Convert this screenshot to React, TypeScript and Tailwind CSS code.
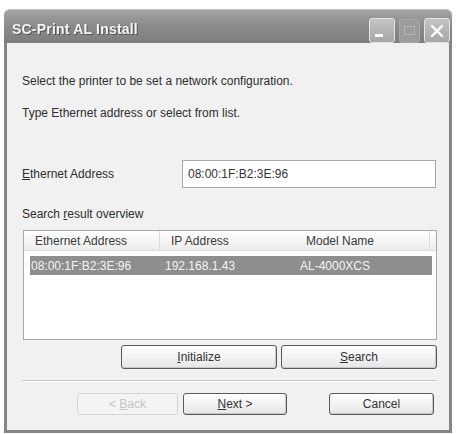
import React from "react";

// ─── Small pieces ────────────────────────────────────────────────────────────

function Btn({
  children,
  className = "",
  disabled = false,
}: {
  children: React.ReactNode;
  className?: string;
  disabled?: boolean;
}) {
  return (
    <button
      disabled={disabled}
      className={
        "flex items-center justify-center rounded-[3px] text-[12px] " +
        (disabled
          ? "border border-[#d4d4d4] bg-[#f4f4f4] text-[#c4c4c4] "
          : "border border-[#5a5a5a] bg-gradient-to-b from-[#ffffff] to-[#e6e6e6] text-[#333] shadow-[inset_-1px_-1px_0_#c8c8c8] ") +
        className
      }
    >
      {children}
    </button>
  );
}

function TitleButton({ children, faded = false }: { children: React.ReactNode; faded?: boolean }) {
  return (
    <div
      className={
        "flex items-center justify-center rounded-[3px] " +
        (faded
          ? "w-[21px] h-[24px] border border-[#a8a8a8] bg-[#9c9c9c]"
          : "w-[26px] h-[25px] border border-[#e4e4e4] bg-gradient-to-b from-[#c4c4c4] to-[#a6a6a6]")
      }
    >
      {children}
    </div>
  );
}

// ─── App ─────────────────────────────────────────────────────────────────────

export default function App() {
  return (
    <div
      className="w-[456px] h-[434px] bg-white pt-[9px] pl-[4px]"
      style={{ fontFamily: '"Liberation Sans", Arial, sans-serif' }}
    >
      <div className="w-[448px] h-[424px] flex flex-col">
        {/* ── Title bar ─────────────────────────────────────────────── */}
        <div className="h-[34px] rounded-t-[6px] bg-gradient-to-b from-[#a4a4a4] via-[#8a8a8a] to-[#7e7e7e] border-t border-[#c0c0c0] flex items-center pl-[8px] pr-[2px] pt-[6px]">
          <span className="text-[#f4f4f4] font-bold text-[14px] tracking-[0.2px] drop-shadow-[1px_1px_0_#555]">
            SC-Print AL Install
          </span>
          <div className="flex-1" />
          <div className="flex items-center gap-[4px] mt-[2px]">
            <TitleButton>
              <div className="w-[8px] h-[3px] bg-white mt-[10px] -ml-[6px]" />
            </TitleButton>
            <TitleButton faded>
              <div className="w-[11px] h-[9px] border border-[#b4b4b4]" />
            </TitleButton>
            <TitleButton>
              <svg viewBox="0 0 16 16" className="w-[16px] h-[16px]">
                <path d="M3 3 L13 13 M13 3 L3 13" stroke="white" strokeWidth="2.4" strokeLinecap="round" />
              </svg>
            </TitleButton>
          </div>
        </div>

        {/* ── Body ──────────────────────────────────────────────────── */}
        <div className="flex-1 bg-[#f1f1f1] border-x-[3px] border-b-[3px] border-[#858585] pl-[15px] pr-[12px] text-[12px] text-[#2e2e2e] flex flex-col">
          <p className="mt-[30px] leading-[16px]">Select the printer to be set a network configuration.</p>
          <p className="mt-[16px] leading-[16px]">Type Ethernet address or select from list.</p>

          {/* Ethernet address row */}
          <div className="mt-[39px] flex items-center">
            <span className="w-[160px]">
              <span className="underline">E</span>thernet Address
            </span>
            <div className="ml-auto mr-[1px] w-[254px] h-[28px] bg-white border border-[#a8a8a8] flex items-center px-[5px] text-[#333]">
              08:00:1F:B2:3E:96
            </div>
          </div>

          <p className="mt-[18px] leading-[16px]">
            Search <span className="underline">r</span>esult overview
          </p>

          {/* Result list */}
          <div className="mt-[8px] h-[110px] w-[414px] ml-[1px] bg-white border border-[#a8a8a8] flex flex-col">
            <div className="h-[20px] flex items-center bg-gradient-to-b from-[#ffffff] to-[#ececec] border-b border-[#dcdcdc] text-[#3a3a3a]">
              <div className="w-[136px] pl-[11px] border-r border-[#dcdcdc] h-full flex items-center">Ethernet Address</div>
              <div className="w-[134px] pl-[11px] h-full flex items-center">IP Address</div>
              <div className="w-[136px] pl-[12px] border-r border-[#dcdcdc] h-full flex items-center">Model Name</div>
            </div>
            <div className="mt-[5px] ml-[6px] w-[402px] h-[19px] bg-[#8e8e8e] text-[#f4f4f4] flex items-center">
              <div className="w-[130px] pl-[1px]">08:00:1F:B2:3E:96</div>
              <div className="w-[134px] pl-[5px]">192.168.1.43</div>
              <div className="pl-[6px]">AL-4000XCS</div>
            </div>
          </div>

          {/* Initialize / Search */}
          <div className="mt-[5px] flex justify-end gap-[4px]">
            <Btn className="w-[156px] h-[24px]">
              <span><span className="underline">I</span>nitialize</span>
            </Btn>
            <Btn className="w-[156px] h-[24px]">
              <span><span className="underline">S</span>earch</span>
            </Btn>
          </div>

          <div className="mt-[11px] h-0 border-t border-[#c6c6c6] border-b border-b-white w-[414px]" />

          {/* Wizard buttons */}
          <div className="mt-[11px] flex items-center pr-[3px]">
            <div className="w-[55px]" />
            <Btn disabled className="w-[101px] h-[22px]">
              <span>&lt; <span className="underline">B</span>ack</span>
            </Btn>
            <Btn className="ml-[5px] w-[104px] h-[22px]">
              <span><span className="underline">N</span>ext &gt;</span>
            </Btn>
            <div className="flex-1" />
            <Btn className="w-[105px] h-[22px]">Cancel</Btn>
          </div>
        </div>
      </div>
    </div>
  );
}
